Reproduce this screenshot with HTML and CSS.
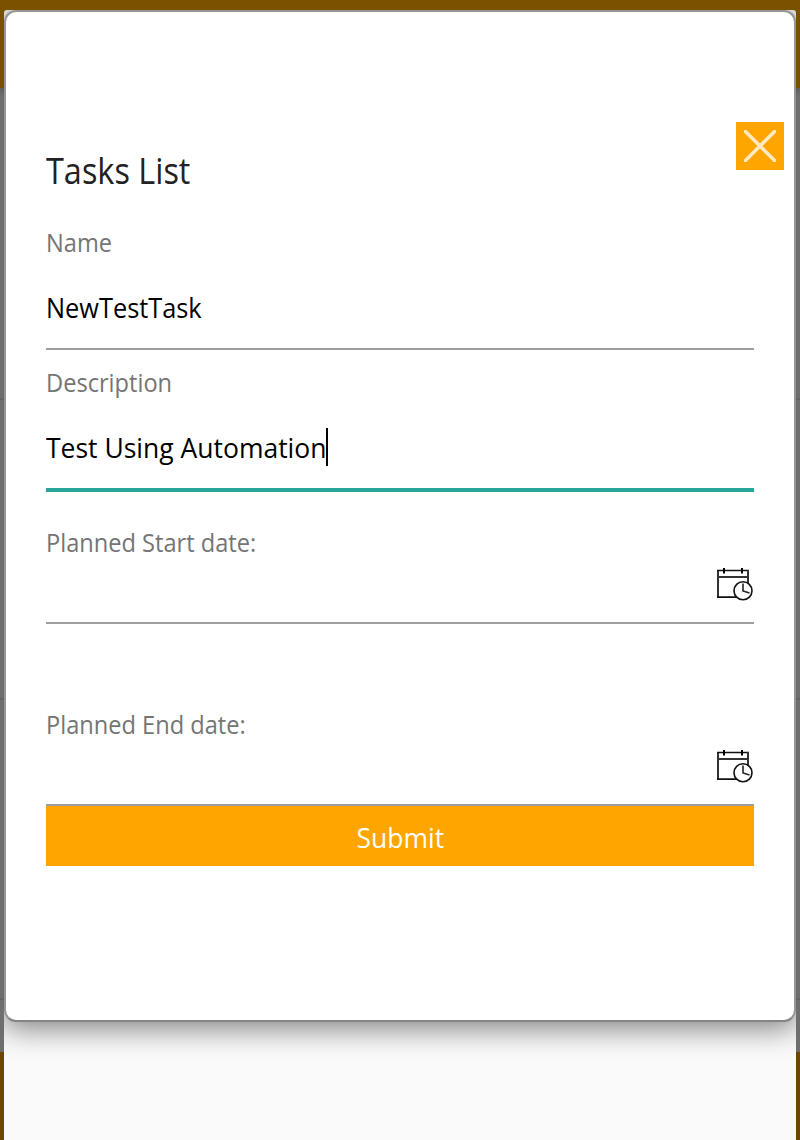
FILE: index.html
```html
<!DOCTYPE html>
<html lang="en">
<head>
<meta charset="utf-8">
<title>Tasks List</title>
<link rel="stylesheet" href="styles.css">
</head>
<body>
<svg class="defs" width="0" height="0" aria-hidden="true">
  <symbol id="calendar" viewBox="0 0 40 36">
    <path d="M4 4v27.500" stroke="#333" stroke-width="2" fill="none"/>
    <path d="M3 4.500h32M3 31.200h20" stroke="#111" stroke-width="1.700" fill="none"/>
    <path d="M3 11h32M34 4v14" stroke="#333" stroke-width="2" fill="none"/>
    <path d="M10 2v5.500M28 2v5.500" stroke="#000" stroke-width="2" fill="none"/>
    <circle cx="29" cy="24.700" r="9" fill="#fff" stroke="#111" stroke-width="1.600"/>
    <path d="M29 17.500v7.500l6.500 2" stroke="#222" stroke-width="1.600" fill="none"/>
  </symbol>
</svg>
<div class="page">
  <div class="bar"></div>
  <div class="list"><div class="item"></div><div class="item"></div><div class="item"></div><div class="item"></div></div>
  <div class="bar bar-bottom"></div>
</div>
<div class="sheet">
  <form class="dialog">
    <button type="button" class="close" aria-label="Close">
      <svg width="32" height="32" viewBox="0 0 32 32"><path d="M0 0L32 32M32 0L0 32" stroke="#fff" stroke-opacity=".76" stroke-width="3.400"/></svg>
    </button>
    <h1 class="title"><span class="text t-title">Tasks List</span></h1>
    <div class="field">
      <div class="label"><span class="text">Name</span></div>
      <div class="value"><span class="text t-task">NewTestTask</span></div>
    </div>
    <div class="field field-active">
      <div class="label"><span class="text">Description</span></div>
      <div class="value"><span class="text t-test">Test Using Automation</span><i class="caret"></i></div>
    </div>
    <div class="field date date-start">
      <div class="label"><span class="text">Planned Start date:</span></div>
      <div class="picker"><svg width="40" height="36"><use href="#calendar"/></svg></div>
    </div>
    <div class="field date">
      <div class="label"><span class="text">Planned End date:</span></div>
      <div class="picker"><svg width="40" height="36"><use href="#calendar"/></svg></div>
    </div>
    <button type="button" class="submit"><span class="text t-submit">Submit</span></button>
  </form>
</div>
</body>
</html>
```
FILE: styles.css
```css
* { box-sizing: border-box; }
body { margin: 0; height: 1140px; overflow: hidden; position: relative; font-family: "Open Sans", "Noto Sans", sans-serif; background: #6f6e6d; }
.defs { position: absolute; }
.page { height: 1140px; display: flex; flex-direction: column; }
.bar { height: 88px; background: #7b5100; box-shadow: 0 2px 8px rgba(0,0,0,.3); }
.bar-bottom { background: #6d4700; box-shadow: none; }
.list { flex: 1; padding-top: 12px; }
.item { height: 300px; border-bottom: 2px solid #636363; }
.item:last-child { height: 52px; border: 0; }
.sheet { position: absolute; inset: 10px 4px 0; background: #fafafa; border-radius: 3px 3px 0 0; overflow: hidden; }
.dialog { position: relative; height: 1012px; border: 2px solid #969696; border-bottom-color: #858585; border-radius: 12px; background: #fff; padding: 136px 40px 0; box-shadow: 0 4px 30px 2px rgba(0,0,0,.5); }
.close { position: absolute; top: 110px; right: 10px; width: 48px; height: 48px; padding: 8px; border: 0; background: #ffa500; }
.close svg { display: block; }
.title { margin: 0; height: 72px; font-size: 36px; font-weight: 400; line-height: 46px; color: #222; }
.field { height: 130px; border-bottom: 2px solid #9e9e9e; }
.field-active { height: 142px; border-bottom: 4px solid #26a69a; }
.label { height: 48px; font-size: 25.5px; line-height: 44px; color: #757575; }
.value { display: flex; align-items: center; height: 80px; padding-bottom: 2px; font-size: 28px; line-height: 40px; color: #000; }
.field-active .label { padding-top: 10px; height: 58px; }
.caret { width: 2px; height: 38px; margin-left: -16px; background: #000; }
.date { height: 132px; padding-top: 28px; }
.date-start { margin-bottom: 50px; }
.date .label { height: 46px; }
.picker { display: flex; justify-content: flex-end; height: 36px; }
.submit { display: block; width: 100%; height: 60px; padding: 4px 0 0; border: 0; background: #ffa500; color: #fff; font: 400 28px/40px "Open Sans", sans-serif; }
.text { display: inline-block; white-space: nowrap; transform: scaleX(.926); transform-origin: left; }
.t-title { transform: scaleX(.901); }
.t-task { transform: scaleX(.905); }
.t-test { transform: scaleX(.946); }
.t-submit { transform: translateY(-1px) scaleX(.945); transform-origin: center; }
```
